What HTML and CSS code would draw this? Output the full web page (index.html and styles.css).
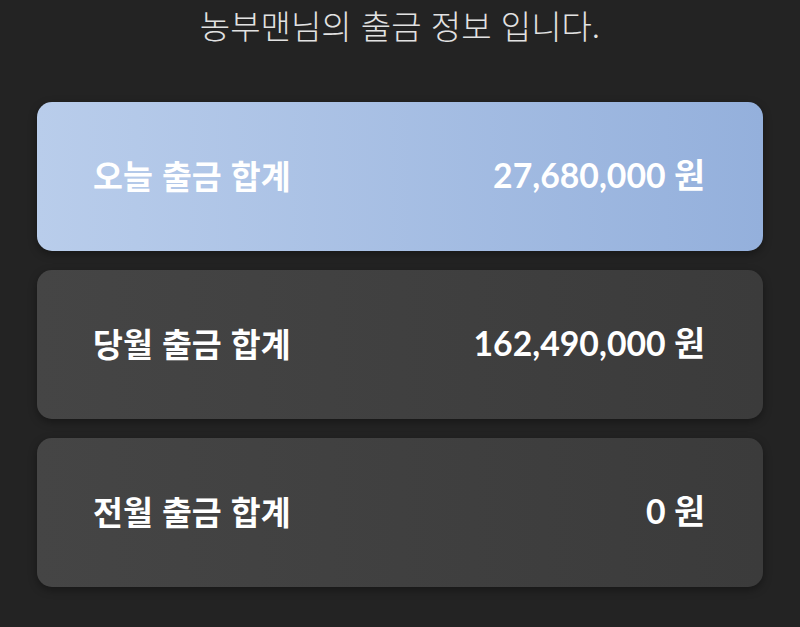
FILE: index.html
```html
<!DOCTYPE html>
<html lang="ko">
<head>
<meta charset="utf-8">
<link rel="stylesheet" href="styles.css">
</head>
<body>
<div class="page">
  <h1 class="title">농부맨님의 출금 정보 입니다.</h1>
  <div class="cards">
    <div class="card card-primary">
      <span class="label">오늘 출금 합계</span>
      <span class="amount">27,680,000 원</span>
    </div>
    <div class="card">
      <span class="label">당월 출금 합계</span>
      <span class="amount">162,490,000 원</span>
    </div>
    <div class="card">
      <span class="label">전월 출금 합계</span>
      <span class="amount">0 원</span>
    </div>
  </div>
</div>
</body>
</html>
```
FILE: styles.css
```css
html, body {
  margin: 0;
  padding: 0;
  background: #232323;
  height: 100%;
}
.page {
  display: flex;
  flex-direction: column;
  font-family: "Noto Sans CJK KR", "Noto Sans", sans-serif;
}
.title {
  margin: 0;
  padding-top: 0;
  height: 102px;
  text-align: center;
  color: #e2e2e2;
  font-weight: 300;
  font-size: 33px;
  line-height: 50px;
}
.cards {
  display: flex;
  flex-direction: column;
  gap: 19px;
  padding: 0 37px;
}
.card {
  height: 149px;
  box-sizing: border-box;
  border-radius: 15px;
  background: linear-gradient(90deg, #454545, #3b3b3b);
  box-shadow: 0 3px 8px rgba(0,0,0,0.35);
  display: flex;
  align-items: center;
  justify-content: space-between;
  padding: 0 58px 4px 56px;
  color: #fff;
  font-weight: 700;
}
.card-primary {
  background: linear-gradient(90deg, #b9cdeb, #94b0dc);
}
.label {
  font-family: "Noto Sans CJK KR", sans-serif;
  font-size: 32.5px;
  line-height: 40px;
}
.amount {
  font-family: Lato, "Noto Sans CJK KR", sans-serif;
  font-size: 33.8px;
  line-height: 40px;
}
```
